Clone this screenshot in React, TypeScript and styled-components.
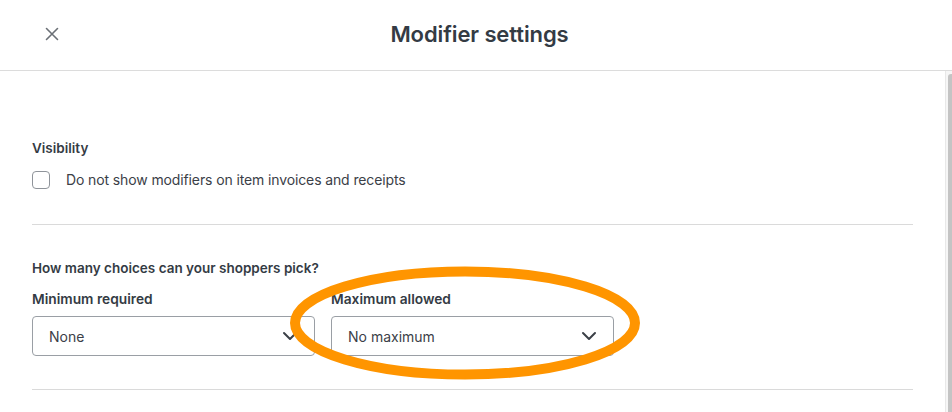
import React, { FC } from "react";
import styled, { createGlobalStyle } from "styled-components";

const GlobalStyle = createGlobalStyle`
  html, body {
    margin: 0;
    padding: 0;
    background: #fff;
  }
  body {
    font-family: Inter, "Noto Sans", "Liberation Sans", sans-serif;
    color: #3b4047;
    -webkit-font-smoothing: antialiased;
  }
`;

const Page = styled.div`
  width: 952px;
  height: 412px;
  overflow: hidden;
  display: flex;
  flex-direction: column;
`;

const Header = styled.header`
  height: 70px;
  flex: none;
  display: grid;
  grid-template-columns: 104px 1fr 104px;
  align-items: center;
  border-bottom: 1px solid #dcdcdc;
`;

const CloseButton = styled.button`
  justify-self: start;
  margin-left: 44px;
  width: 16px;
  height: 16px;
  padding: 0;
  border: none;
  background: none;
  display: flex;
  align-items: center;
  justify-content: center;
  margin-top: -2px;
`;

const Title = styled.h1`
  margin: -3px 0 0;
  padding-left: 7px;
  text-align: center;
  font-size: 22px;
  font-weight: 600;
  color: #343b44;
  letter-spacing: -0.1px;
`;

const Body = styled.div`
  flex: 1;
  display: flex;
  min-height: 0;
`;

const Content = styled.main`
  flex: 1;
  padding: 67px 32px 0;
`;

const Scrollbar = styled.div`
  box-sizing: border-box;
  width: 7px;
  border-left: 1px solid #e8e8e8;
  background: #f6f6f6;
  display: flex;
  padding-top: 3px;
  padding-left: 2px;
`;

const Thumb = styled.div`
  flex: 1;
  background: #c4c4c4;
  border-radius: 3px 0 0 0;
`;

const SectionTitle = styled.h2`
  margin: 0;
  font-size: 13.5px;
  font-weight: 600;
  line-height: 20px;
  color: #343b44;
`;

const CheckRow = styled.label`
  display: flex;
  align-items: center;
  gap: 16px;
  margin-top: 12px;
  font-size: 14px;
  line-height: 20px;
  letter-spacing: -0.12px;
  color: #3b4047;
`;

const CheckBox = styled.span`
  width: 16px;
  height: 16px;
  border: 1px solid #8f949a;
  border-radius: 4px;
  flex: none;
`;

const Divider = styled.hr<{ top: number }>`
  margin: ${({ top }) => top}px 0 0;
  border: none;
  border-top: 1px solid #dadada;
`;

const Section = styled.section`
  padding-top: 33px;
`;

const FieldGrid = styled.div`
  display: grid;
  grid-template-columns: repeat(3, 1fr);
  column-gap: 16px;
  margin-top: 13px;
`;

const Field = styled.div`
  position: relative;
  display: flex;
  flex-direction: column;
  gap: 8px;
`;

const FieldLabel = styled.span`
  font-size: 13.75px;
  font-weight: 600;
  line-height: 17px;
  color: #343b44;
`;

const Select = styled.div`
  height: 38px;
  border: 1px solid #9a9fa5;
  border-radius: 4px;
  display: flex;
  align-items: center;
  justify-content: space-between;
  padding: 0 16px;
  font-size: 14px;
  color: #3b4047;
`;

const Highlight = styled.svg`
  position: absolute;
  left: -42px;
  top: -25px;
  pointer-events: none;
  overflow: visible;
`;

const Chevron: FC = () => (
  <svg width="16" height="10" viewBox="0 0 16 10">
    <path
      d="M2 2 L8 8 L14 2"
      fill="none"
      stroke="#3b4047"
      strokeWidth="2"
      strokeLinecap="round"
      strokeLinejoin="round"
    />
  </svg>
);

const SelectField: FC<{ label: string; value: string; circled?: boolean }> = ({
  label,
  value,
  circled,
}) => (
  <Field>
    <FieldLabel>{label}</FieldLabel>
    <Select>
      <span>{value}</span>
      <Chevron />
    </Select>
    {circled && (
      <Highlight width="352" height="114">
        <ellipse
          cx="176"
          cy="57"
          rx="170"
          ry="51.5"
          fill="none"
          stroke="#ff9500"
          strokeWidth="10"
        />
      </Highlight>
    )}
  </Field>
);

const App: FC = () => {
  return (
    <Page>
      <GlobalStyle />
      <Header>
        <CloseButton aria-label="Close">
          <svg width="14" height="14" viewBox="0 0 14 14">
            <path
              d="M1.5 1.5 L12.5 12.5 M12.5 1.5 L1.5 12.5"
              stroke="#6b7076"
              strokeWidth="1.6"
              strokeLinecap="round"
            />
          </svg>
        </CloseButton>
        <Title>Modifier settings</Title>
        <span />
      </Header>
      <Body>
        <Content>
          <SectionTitle>Visibility</SectionTitle>
          <CheckRow>
            <CheckBox />
            Do not show modifiers on item invoices and receipts
          </CheckRow>
          <Divider top={34} />
          <Section>
            <SectionTitle>How many choices can your shoppers pick?</SectionTitle>
            <FieldGrid>
              <SelectField label="Minimum required" value="None" />
              <SelectField label="Maximum allowed" value="No maximum" circled />
              <span />
            </FieldGrid>
          </Section>
          <Divider top={33} />
        </Content>
        <Scrollbar>
          <Thumb />
        </Scrollbar>
      </Body>
    </Page>
  );
};

export default App;
